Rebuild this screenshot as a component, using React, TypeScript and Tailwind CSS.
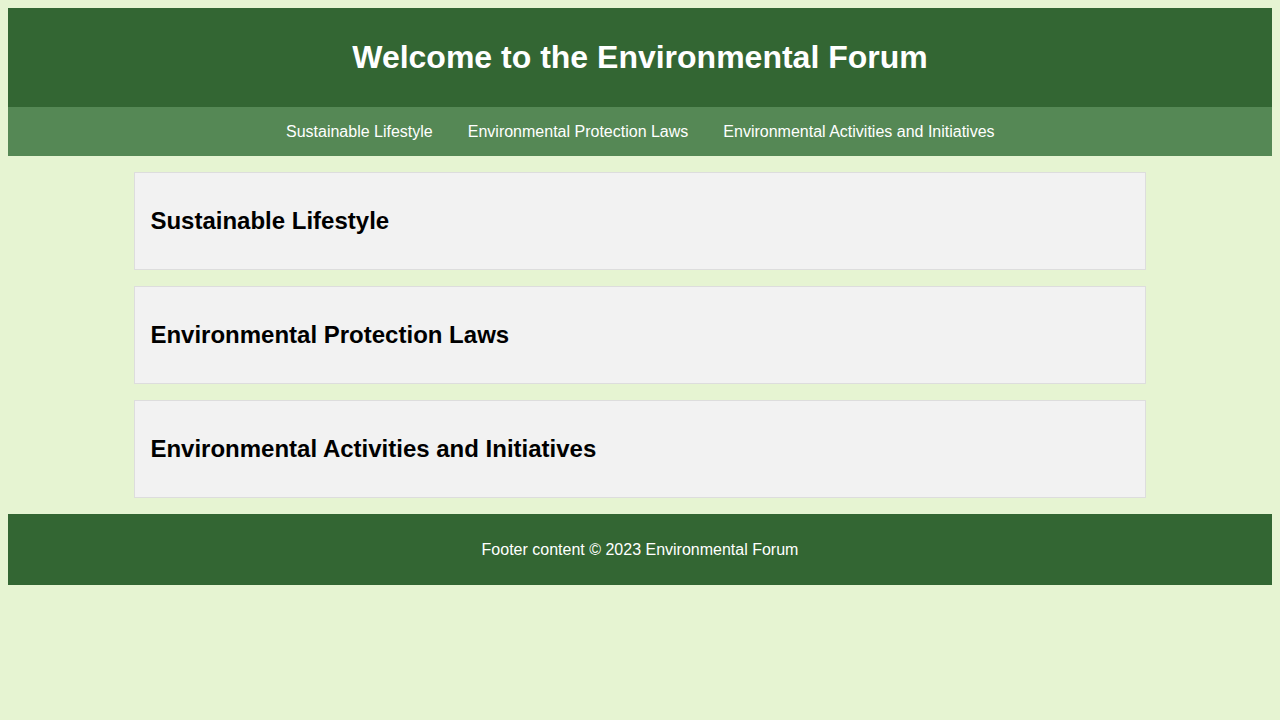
const NAV_ITEMS = [
  'Sustainable Lifestyle',
  'Environmental Protection Laws',
  'Environmental Activities and Initiatives',
];

const SECTIONS = [
  { id: 'lifestyle', title: 'Sustainable Lifestyle' },
  { id: 'laws', title: 'Environmental Protection Laws' },
  { id: 'activities', title: 'Environmental Activities and Initiatives' },
];

export default function App() {
  return (
    <div className="min-h-[720px] bg-[#e6f4d2] p-2 font-['Liberation_Sans',Arial,sans-serif]">
      {/* Header */}
      <header className="bg-[#336633] p-[10px] text-center text-white">
        <h1 className="my-[21px] text-[32px] font-bold leading-[37px]">
          Welcome to the Environmental Forum
        </h1>
      </header>

      {/* Nav */}
      <nav className="flex h-[49px] items-center bg-[#558855] pl-[253px]">
        <ul className="flex items-center">
          {NAV_ITEMS.map((item) => (
            <li key={item}>
              <a href="#" className="block py-3 pl-[25px] pr-[10px] text-base leading-[18px] text-white">
                {item}
              </a>
            </li>
          ))}
        </ul>
      </nav>

      {/* Main content */}
      <main className="mx-auto mt-4 w-[80%]">
        {SECTIONS.map((s) => (
          <section key={s.id} className="mb-4 border border-[#dddddd] bg-[#f2f2f2] p-[15px]">
            <h2 className="my-5 text-2xl font-bold leading-[26px] text-black">{s.title}</h2>
          </section>
        ))}
      </main>

      {/* Footer */}
      <footer className="bg-[#336633] p-[10px] text-center text-white">
        <p className="my-4 text-base leading-[19px]">Footer content © 2023 Environmental Forum</p>
      </footer>
    </div>
  );
}
